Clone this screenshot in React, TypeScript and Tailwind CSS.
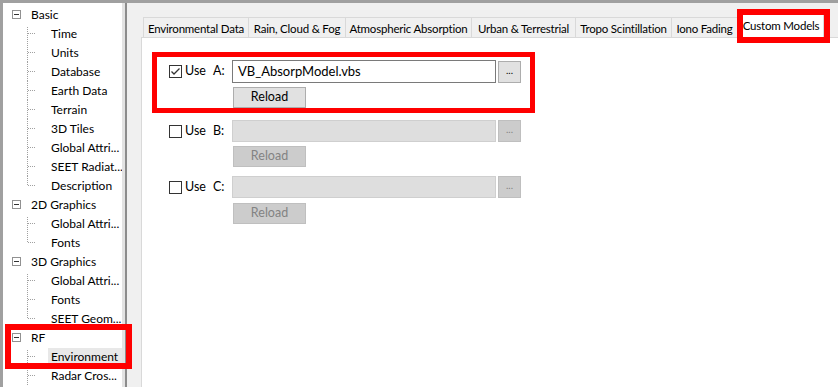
import React from "react";

type Group = { label: string; children: string[]; open?: boolean };

const tree: Group[] = [
  {
    label: "Basic",
    children: [
      "Time",
      "Units",
      "Database",
      "Earth Data",
      "Terrain",
      "3D Tiles",
      "Global Attri...",
      "SEET Radiat...",
      "Description",
    ],
  },
  { label: "2D Graphics", children: ["Global Attri...", "Fonts"] },
  { label: "3D Graphics", children: ["Global Attri...", "Fonts", "SEET Geom..."] },
  { label: "RF", children: ["Environment", "Radar Cros..."], open: true },
];

const tabs = [
  { label: "Environmental Data", w: "w-[106px]" },
  { label: "Rain, Cloud & Fog", w: "w-[97px]" },
  { label: "Atmospheric Absorption", w: "w-[126px]" },
  { label: "Urban & Terrestrial", w: "w-[104px]" },
  { label: "Tropo Scintillation", w: "w-[96px]" },
  { label: "Iono Fading", w: "w-[66px]" },
];

const Connector = ({ last, first }: { last: boolean; first: boolean }) => (
  <svg width="21" height="19" className="shrink-0">
    <line
      x1="0.5"
      y1={first ? 3 : 0}
      x2="0.5"
      y2={last ? 10 : 19}
      stroke="#a0a0a0"
      strokeDasharray="1 1"
    />
    <line x1="1" y1="9.5" x2="8" y2="9.5" stroke="#a0a0a0" strokeDasharray="1 1" />
  </svg>
);

const TreeGroup = ({ group }: { group: Group }) => (
  <div>
    <div className="h-[19px] flex items-center">
      <div className="ml-[9px] w-[9px] h-[9px] border border-[#919191] bg-white flex items-center justify-center">
        <div className="w-[5px] h-px bg-[#333]" />
      </div>
      <span className="ml-[10px]">{group.label}</span>
    </div>
    {group.children.map((c, i) => (
      <div key={i} className="h-[19px] flex items-center">
        <div className="w-[24px] shrink-0" />
        <Connector first={i === 0} last={i === group.children.length - 1 && !group.open} />
        <span
          className={
            "flex-1 h-[18px] leading-[18px] pl-[3px] whitespace-nowrap " +
            (c === "Environment" ? "bg-[#e8e8e8]" : "")
          }
        >
          {c}
        </span>
      </div>
    ))}
  </div>
);

const CheckBox = ({ checked }: { checked?: boolean }) => (
  <div className="w-[13px] h-[13px] border border-[#333] bg-white shrink-0 flex items-center justify-center">
    {checked && (
      <svg width="11" height="11" viewBox="0 0 11 11">
        <path d="M1.5 5.5 L4 8 L9.5 2.5" fill="none" stroke="#333" strokeWidth="1.3" />
      </svg>
    )}
  </div>
);

const ModelRow = ({
  letter,
  value,
  enabled,
  inputH,
  reloadGap,
}: {
  letter: string;
  value?: string;
  enabled?: boolean;
  inputH: string;
  reloadGap: string;
}) => (
  <div>
    <div className="flex items-center">
      <CheckBox checked={enabled} />
      <span className="w-[31px] pl-[3px] text-[12.5px]">Use</span>
      <span className="w-[19px] text-[12.5px]">{letter}:</span>
      <div
        className={
          "w-[264px] flex items-center pl-[5px] text-[13px] " +
          inputH +
          (enabled ? " bg-white border border-[#7a7a7a]" : " bg-[#dedede] border border-[#cfcfcf]")
        }
      >
        {value}
      </div>
      <div
        className={
          "ml-[2px] w-[23px] h-[22px] flex items-center justify-center text-[10px] pb-[3px] " +
          (enabled
            ? "bg-[#e1e1e1] border border-[#adadad] text-black"
            : "bg-[#cccccc] border border-[#bfbfbf] text-[#838383]")
        }
      >
        ...
      </div>
    </div>
    <div
      className={
        "ml-[64px] w-[73px] h-[21px] flex items-center justify-center text-[12.5px] " +
        reloadGap +
        (enabled
          ? " bg-[#e1e1e1] border border-[#adadad] text-black"
          : " bg-[#cccccc] border border-[#bfbfbf] text-[#838383]")
      }
    >
      Reload
    </div>
  </div>
);

export default function App() {
  return (
    <div className="relative w-[838px] h-[387px] overflow-hidden flex bg-[#f0f0f0] border-t-[3px] border-[#a0a0a0] text-[12px] text-black font-['Lato',sans-serif]">
      {/* tree panel */}
      <div className="w-[122px] h-full bg-white border-l-[3px] border-[#a0a0a0] pt-[2px] overflow-hidden shrink-0">
        {tree.map((g) => (
          <TreeGroup key={g.label} group={g} />
        ))}
      </div>
      <div className="w-[3px] bg-[#e3e3e3] shrink-0" />
      <div className="w-[2px] bg-[#8c8c8c] shrink-0" />
      <div className="w-[14px] bg-[#f0f0f0] shrink-0" />

      {/* tab control */}
      <div className="flex-1 flex flex-col min-w-0">
        <div className="h-[34px] flex items-end pl-[2px] shrink-0 text-[11.5px] tracking-[-0.2px]">
          {tabs.map((t) => (
            <div
              key={t.label}
              className={
                "h-[20px] pt-[2px] flex items-center justify-center whitespace-nowrap bg-[#f0f0f0] border-t border-r border-[#d9d9d9] first:border-l " +
                t.w
              }
            >
              {t.label}
            </div>
          ))}
          <div className="relative w-[86px] h-[24px] -mb-px bg-white border-t border-x border-[#d9d9d9] flex items-center justify-center whitespace-nowrap pb-[1px] z-10">
            Custom Models
            <div className="absolute left-[-2px] top-[-6px] w-[93px] h-[34px] border-[6px] border-[#ff0000]" />
          </div>
        </div>
        <div className="flex-1 bg-white border-l border-t border-[#d9d9d9] pl-[10px] pt-[14px]">
          <div className="w-[383px] border-[5px] border-[#ff0000] pt-[3px] pl-[12px]">
            <ModelRow letter="A" value="VB_AbsorpModel.vbs" enabled inputH="h-[23px]" reloadGap="mt-[4px]" />
          </div>
          <div className="pl-[17px] mt-[7px]">
            <ModelRow letter="B" inputH="h-[22px]" reloadGap="mt-[4px]" />
          </div>
          <div className="pl-[17px] mt-[9px]">
            <ModelRow letter="C" inputH="h-[22px]" reloadGap="mt-[5px]" />
          </div>
        </div>
      </div>

      {/* annotation around RF */}
      <div className="absolute left-[5px] top-[321px] w-[127px] h-[45px] border-[6px] border-[#ff0000]" />
    </div>
  );
}
